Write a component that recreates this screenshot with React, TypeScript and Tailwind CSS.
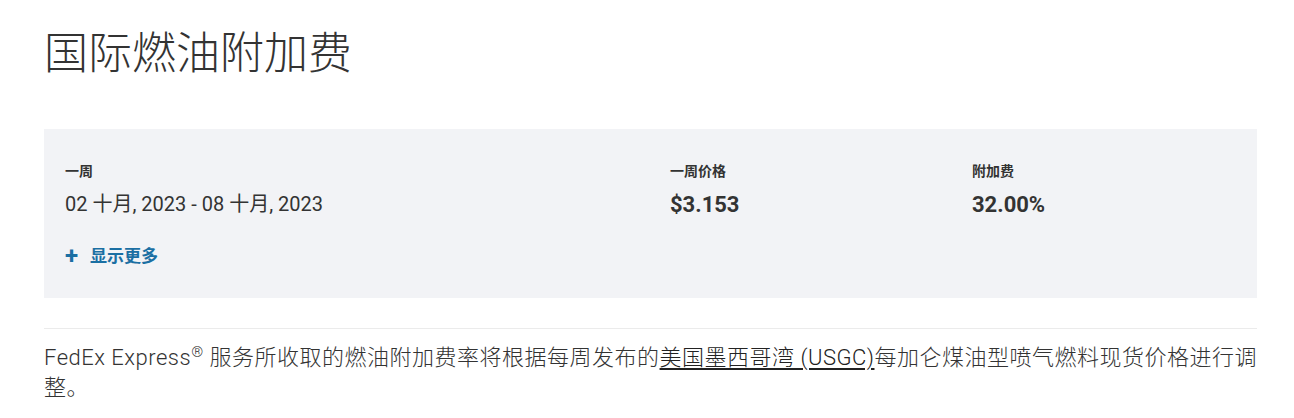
export default function App() {
  const cjk = "font-['Roboto','Noto_Sans_CJK_SC',sans-serif]"
  return (
    <div className={`bg-white pl-[44px] pr-[37px] pt-[24px] text-[#333] ${cjk}`}>
      <h1 className="text-[44px] font-light leading-[60px] text-[#333]">国际燃油附加费</h1>

      <div className="mt-[45px] flex h-[169px] bg-[#f2f3f6] px-[21px] pt-[32px]">
        <div className="w-[605px]">
          <div className="text-[14px] font-bold leading-[20px] text-[#333]">一周</div>
          <div className="mt-[10px] text-[20px] leading-[26px] text-[#333]">02 十月, 2023 - 08 十月, 2023</div>
          <button className="mt-[27px] flex items-center text-[17px] font-bold leading-[24px] text-[#1b6fa3]">
            <span className="text-[24px] font-bold leading-[22px]">+</span>
            <span className="ml-[12px]">显示更多</span>
          </button>
        </div>
        <div className="w-[302px]">
          <div className="text-[14px] font-bold leading-[20px] text-[#333]">一周价格</div>
          <div className="mt-[11px] text-[22px] font-bold leading-[26px] text-[#333]">$3.153</div>
        </div>
        <div className="flex-1">
          <div className="text-[14px] font-bold leading-[20px] text-[#333]">附加费</div>
          <div className="mt-[11px] text-[22px] font-bold leading-[26px] text-[#333]">32.00%</div>
        </div>
      </div>

      <div className="mt-[30px] border-t border-[#ebebeb] pt-[14px]">
        <p className="text-[22px] font-light leading-[30px] tracking-[0.5px] text-[#333]">
          FedEx Express<span className="relative top-[-8px] text-[15px] leading-none">®</span> 服务所收取的燃油附加费率将根据每周发布的
          <a className="text-[#222] underline underline-offset-[3px]">美国墨西哥湾 (USGC)</a>
          每加仑煤油型喷气燃料现货价格进行调整。
        </p>
      </div>
    </div>
  )
}
